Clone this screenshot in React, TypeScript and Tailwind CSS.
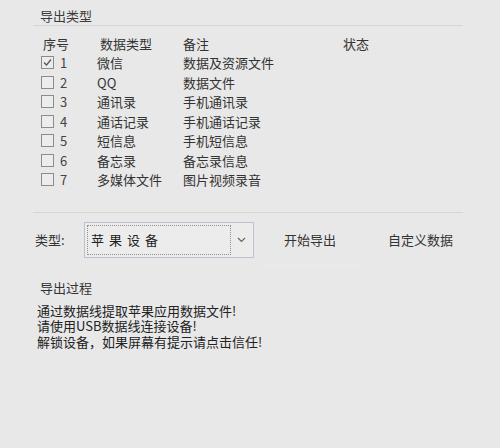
import React from "react";

const font = { fontFamily: '"Noto Sans CJK SC", "Noto Sans", sans-serif' };

const rows = [
  { n: 1, t: "微信", r: "数据及资源文件", c: true },
  { n: 2, t: "QQ", r: "数据文件", c: false },
  { n: 3, t: "通讯录", r: "手机通讯录", c: false },
  { n: 4, t: "通话记录", r: "手机通话记录", c: false },
  { n: 5, t: "短信息", r: "手机短信息", c: false },
  { n: 6, t: "备忘录", r: "备忘录信息", c: false },
  { n: 7, t: "多媒体文件", r: "图片视频录音", c: false },
];

function Box({ checked }: { checked: boolean }) {
  return (
    <div className="w-[13px] h-[13px] border border-[#8c8c8c] bg-[#ececec] flex items-center justify-center">
      {checked && (
        <svg width="11" height="11" viewBox="0 0 11 11">
          <path d="M2 5.5 L4.5 8 L9 2.5" fill="none" stroke="#555" strokeWidth="1.2" />
        </svg>
      )}
    </div>
  );
}

export default function App() {
  return (
    <div className="w-[500px] h-[448px] bg-[#e8e8e8] text-[#333] text-[13px] leading-none relative" style={font}>
      <div className="pl-[33px] pr-[37px] pt-[8px]">
        <div className="pl-[7px] h-[15px] flex items-center text-[#3a3a3a]">导出类型</div>
        <div className="mt-[2px] h-px bg-[#d6d6d6]" />
        <div className="mt-[9px] grid grid-cols-[57px_83px_160px_1fr] pl-[10px] h-[16px] items-center">
          <div>序号</div>
          <div>数据类型</div>
          <div>备注</div>
          <div>状态</div>
        </div>
        <div className="mt-[2px] flex flex-col">
          {rows.map((r) => (
            <div key={r.n} className="grid grid-cols-[56px_86px_160px_1fr] pl-[8px] h-[19.5px] items-center">
              <div className="flex items-center gap-[6px]">
                <Box checked={r.c} />
                <span className="text-[#444]">{r.n}</span>
              </div>
              <div>{r.t}</div>
              <div>{r.r}</div>
              <div />
            </div>
          ))}
        </div>
        <div className="mt-[22px] h-px bg-[#d6d6d6]" />
        <div className="mt-[9px] flex items-center h-[36px]">
          <div className="pl-[2px] w-[51px]">类型:</div>
          <div className="w-[170px] h-[36px] border border-[#b9c3cf] bg-[#ececec] flex items-center p-[2px]">
            <div className="flex-1 h-full border border-dotted border-[#8e8e8e] flex items-center pl-[3px] tracking-[5px] text-[#222]">
              苹果设备
            </div>
            <div className="w-[20px] flex items-center justify-center">
              <svg width="9" height="6" viewBox="0 0 9 6">
                <path d="M1 1 L4.5 4.5 L8 1" fill="none" stroke="#666" strokeWidth="1.2" />
              </svg>
            </div>
          </div>
          <div className="ml-[6px] w-[100px] h-[44px] mt-[8px] pb-[8px] flex items-center justify-center border-b border-[#ececec]">开始导出</div>
          <div className="ml-[28px] h-[36px] flex items-center">自定义数据</div>
        </div>
        <div className="mt-[22px] pl-[7px] h-[15px] flex items-center">导出过程</div>
        <div className="mt-[8px] pl-[4px] flex flex-col text-[#222]">
          <div className="h-[15.5px] flex items-center">通过数据线提取苹果应用数据文件!</div>
          <div className="h-[15.5px] flex items-center">请使用USB数据线连接设备!</div>
          <div className="h-[15.5px] flex items-center">解锁设备，如果屏幕有提示请点击信任!</div>
        </div>
      </div>
    </div>
  );
}
